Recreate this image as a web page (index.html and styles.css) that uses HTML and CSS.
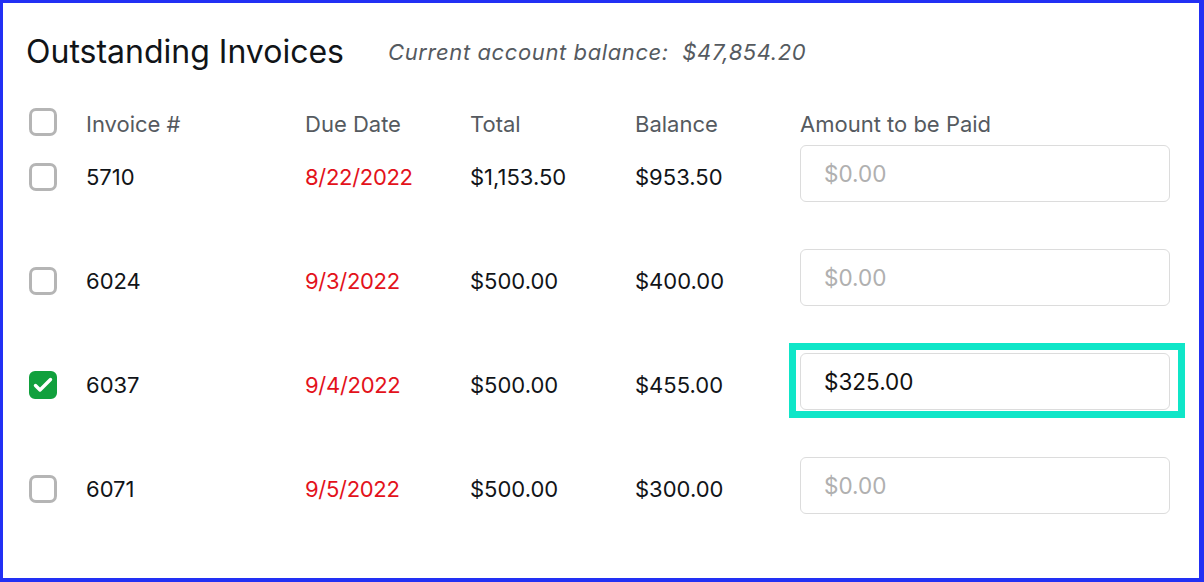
FILE: index.html
```html
<!DOCTYPE html>
<html lang="en">
<head>
  <meta charset="UTF-8" />
  <title>Outstanding Invoices</title>
  <link rel="stylesheet" href="styles.css">
</head>
<body>
  <div class="card">
    <div class="card-head">
      <h1>Outstanding Invoices</h1>
      <span class="balance">Current account balance:&nbsp; $47,854.20</span>
    </div>

    <div class="invoice-table">
      <div class="head-row">
        <span class="check"></span>
        <span class="th">Invoice #</span>
        <span class="th">Due Date</span>
        <span class="th">Total</span>
        <span class="th">Balance</span>
        <span class="th">Amount to be Paid</span>
      </div>

      <div class="row">
        <span class="check"></span>
        <span>5710</span>
        <span class="due">8/22/2022</span>
        <span>$1,153.50</span>
        <span>$953.50</span>
        <div class="pay"><input type="text" placeholder="$0.00"></div>
      </div>

      <div class="row">
        <span class="check"></span>
        <span>6024</span>
        <span class="due">9/3/2022</span>
        <span>$500.00</span>
        <span>$400.00</span>
        <div class="pay"><input type="text" placeholder="$0.00"></div>
      </div>

      <div class="row">
        <span class="check checked">
          <svg width="22" height="22" viewBox="3 3 22 22"><polyline points="6.5,14.5 11,19 21.5,8.5" fill="none" stroke="#fff" stroke-width="3.4" stroke-linecap="round" stroke-linejoin="round"/></svg>
        </span>
        <span>6037</span>
        <span class="due">9/4/2022</span>
        <span>$500.00</span>
        <span>$455.00</span>
        <div class="pay">
          <input type="text" placeholder="$0.00" value="$325.00">
          <span class="focus-ring"></span>
        </div>
      </div>

      <div class="row">
        <span class="check"></span>
        <span>6071</span>
        <span class="due">9/5/2022</span>
        <span>$500.00</span>
        <span>$300.00</span>
        <div class="pay"><input type="text" placeholder="$0.00"></div>
      </div>
    </div>
  </div>
</body>
</html>
```

FILE: styles.css
```css
html, body { margin: 0; height: 100%; }
body { background: #2230f4; font-family: Inter, "Noto Sans", sans-serif; color: #111418; }

.card { background: #fff; margin: 3px 5px 0 3px; height: 575px; padding: 29px 0 0 23px; box-sizing: border-box; }

.card-head { display: flex; align-items: center; gap: 44px; }
.card-head h1 { margin: 0; font-size: 32px; font-weight: 400; line-height: 39px; color: #111418; }
.balance { font-size: 22px; font-style: italic; letter-spacing: 0.6px; color: #555a60; }

.invoice-table { margin: 36px 0 0 3px; font-size: 22px; }
.head-row, .row { display: grid; grid-template-columns: 57px 219px 165px 165px 165px 370px; align-items: center; }
.head-row { height: 28px; margin-bottom: 10px; }
.row { height: 64px; margin-bottom: 40px; }
.th { color: #555a60; margin-top: 4px; }
.due { color: #e3121b; letter-spacing: -0.3px; }

.check { width: 28px; height: 28px; box-sizing: border-box; border: 3px solid #b5b5b5; border-radius: 7px; display: flex; align-items: center; justify-content: center; }
.check.checked { background: #11a03d; border-color: #11a03d; border-radius: 6px; }

.pay { position: relative; align-self: start; }
.pay input { width: 370px; height: 57px; box-sizing: border-box; border: 1px solid #dcdcdc; border-radius: 6px; padding: 0 23px; font-family: Inter, "Noto Sans", sans-serif; font-size: 22.5px; color: #111; outline: none; }
.pay input::placeholder { color: #b0b0b0; }

.focus-ring { position: absolute; left: -11px; top: -10px; right: -15px; bottom: -8px; border: 7px solid #0fe6c8; pointer-events: none; }
```
